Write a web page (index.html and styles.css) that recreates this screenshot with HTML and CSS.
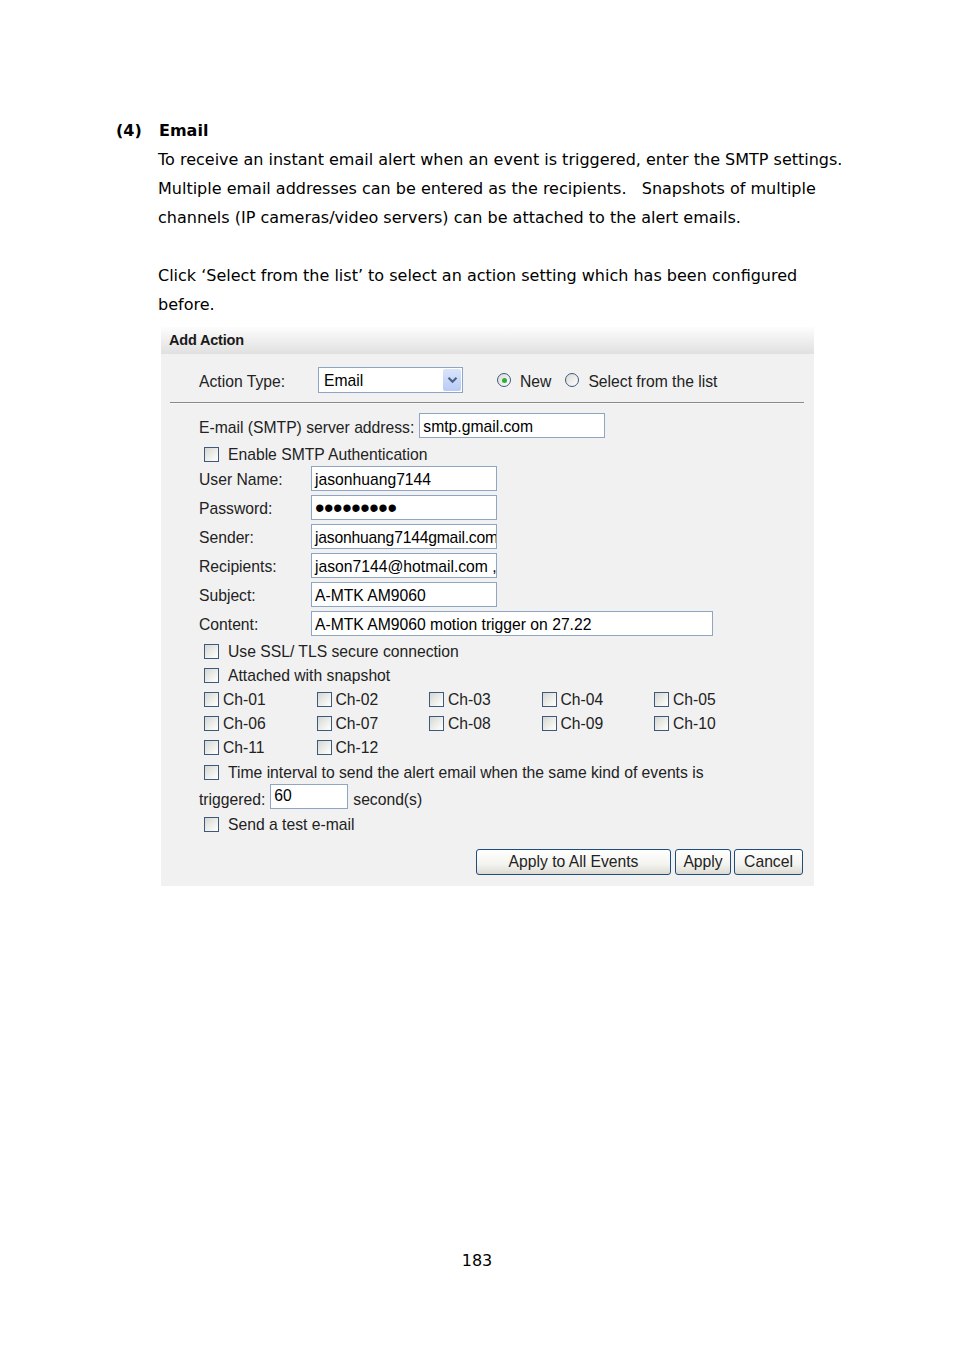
FILE: index.html
```html
<!DOCTYPE html>
<html lang="en">
<head>
<meta charset="utf-8">
<title>Email</title>
<link rel="stylesheet" href="styles.css">
</head>
<body>
<div class="page">
  <h2 class="heading"><span class="num">(4)</span><span>Email</span></h2>
  <div class="content">
    <p class="para">To receive an instant email alert when an event is triggered, enter the SMTP settings.<br>Multiple email addresses can be entered as the recipients.&nbsp;&nbsp; Snapshots of multiple<br>channels (IP cameras/video servers) can be attached to the alert emails.</p>
    <p class="para">Click ‘Select from the list’ to select an action setting which has been configured<br>before.</p>

    <section class="panel">
      <header class="panel-head">Add Action</header>
      <div class="panel-body">
        <div class="type-row">
          <span class="type-lbl">Action Type:</span>
          <div class="select">
            <span class="select-val">Email</span>
            <span class="select-btn"><svg width="11" height="8" viewBox="0 0 11 8"><path d="M1.5 1.8 L5.5 5.8 L9.5 1.8" fill="none" stroke="#4d6185" stroke-width="2.2"/></svg></span>
          </div>
          <span class="radio-opt first"><span class="radio on"></span><span class="rtext">New</span></span>
          <span class="radio-opt"><span class="radio"></span><span class="rtext">Select from the list</span></span>
        </div>
        <div class="sep"></div>

        <div class="form">
          <div class="row r-server"><span class="lbl-free">E-mail (SMTP) server address:</span><span class="field f-std">smtp.gmail.com</span></div>
          <div class="cbrow r-auth"><span class="cb"></span><span class="cbtext">Enable SMTP Authentication</span></div>
          <div class="row"><span class="lbl">User Name:</span><span class="field f-std">jasonhuang7144</span></div>
          <div class="row r-gap"><span class="lbl">Password:</span><span class="field f-std f-pwd"><span class="dots">•••••••••</span></span></div>
          <div class="row r-gap"><span class="lbl">Sender:</span><span class="field f-std f-tight">jasonhuang7144gmail.com</span></div>
          <div class="row r-gap"><span class="lbl">Recipients:</span><span class="field f-std">jason7144@hotmail.com ,</span></div>
          <div class="row r-gap"><span class="lbl">Subject:</span><span class="field f-std">A-MTK AM9060</span></div>
          <div class="row r-gap"><span class="lbl">Content:</span><span class="field f-wide">A-MTK AM9060 motion trigger on 27.22</span></div>
          <div class="cbrow r-ssl"><span class="cb"></span><span class="cbtext">Use SSL/ TLS secure connection</span></div>
          <div class="cbrow"><span class="cb"></span><span class="cbtext">Attached with snapshot</span></div>
          <div class="ch-grid">
            <span class="ch"><span class="cb"></span><span class="chtext">Ch-01</span></span>
            <span class="ch"><span class="cb"></span><span class="chtext">Ch-02</span></span>
            <span class="ch"><span class="cb"></span><span class="chtext">Ch-03</span></span>
            <span class="ch"><span class="cb"></span><span class="chtext">Ch-04</span></span>
            <span class="ch"><span class="cb"></span><span class="chtext">Ch-05</span></span>
            <span class="ch"><span class="cb"></span><span class="chtext">Ch-06</span></span>
            <span class="ch"><span class="cb"></span><span class="chtext">Ch-07</span></span>
            <span class="ch"><span class="cb"></span><span class="chtext">Ch-08</span></span>
            <span class="ch"><span class="cb"></span><span class="chtext">Ch-09</span></span>
            <span class="ch"><span class="cb"></span><span class="chtext">Ch-10</span></span>
            <span class="ch"><span class="cb"></span><span class="chtext">Ch-11</span></span>
            <span class="ch"><span class="cb"></span><span class="chtext">Ch-12</span></span>
          </div>
          <div class="cbrow r-time"><span class="cb"></span><span class="cbtext">Time interval to send the alert email when the same kind of events is</span></div>
          <div class="row r-trig"><span class="trig-lbl">triggered:</span><span class="field f-num">60</span><span class="unit">second(s)</span></div>
          <div class="cbrow r-test"><span class="cb"></span><span class="cbtext">Send a test e-mail</span></div>
          <div class="btns">
            <button class="btn b-all">Apply to All Events</button>
            <button class="btn b-apply">Apply</button>
            <button class="btn b-cancel">Cancel</button>
          </div>
        </div>
      </div>
    </section>
  </div>
  <div class="pagenum">183</div>
</div>
</body>
</html>
```

FILE: styles.css
```css
html, body {
  margin: 0;
  padding: 0;
  background: #ffffff;
}

.page {
  width: 954px;
  padding-top: 117px;
  font-family: "DejaVu Sans", Verdana, sans-serif;
  color: #000;
}

.heading {
  margin: 0;
  padding-left: 116px;
  font-size: 16px;
  font-weight: bold;
  line-height: 28px;
  display: flex;
}

.heading .num {
  width: 43px;
}

.content {
  margin-left: 158px;
}

.para {
  margin: 0 0 29px 0;
  font-size: 16px;
  line-height: 29px;
}

.para:last-of-type {
  margin-bottom: 0;
}

/* Panel */
.panel {
  margin-top: 8px;
  margin-left: 3px;
  width: 653px;
  background: #f1f1f1;
  font-family: "Liberation Sans", Arial, sans-serif;
  font-size: 15.7px;
  color: #222;
}

.panel-head {
  height: 27px;
  line-height: 27px;
  padding-left: 8px;
  font-weight: bold;
  font-size: 14.5px;
  letter-spacing: -0.2px;
  color: #1a1a1a;
  background: linear-gradient(#fdfdfd, #e0e0e0);
}

.panel-body {
  padding-bottom: 11px;
}

.type-row {
  display: flex;
  align-items: center;
  height: 26px;
  padding-top: 13px;
  padding-left: 38px;
}

.type-lbl {
  width: 119px;
  padding-top: 3px;
}

.select {
  box-sizing: border-box;
  width: 145px;
  height: 26px;
  border: 1px solid #8ea6c4;
  background: #fff;
  display: flex;
  align-items: center;
  justify-content: space-between;
  padding-left: 5px;
  padding-right: 1px;
  color: #000;
}

.select-val {
  padding-top: 2px;
}

.select-btn {
  width: 18px;
  height: 22px;
  border-radius: 2px;
  background: linear-gradient(#dae5fc, #b8cbf5);
  display: flex;
  align-items: center;
  justify-content: center;
}

.radio-opt {
  display: flex;
  align-items: center;
  margin-left: 14px;
}

.radio-opt.first {
  margin-left: 34px;
}

.rtext {
  padding-top: 3px;
}

.radio {
  box-sizing: border-box;
  width: 14px;
  height: 14px;
  border: 1px solid #3d5a7e;
  border-radius: 50%;
  background: linear-gradient(135deg, #d9d9d4, #ffffff);
  margin-right: 9px;
  display: flex;
  align-items: center;
  justify-content: center;
}

.radio.on::after {
  content: "";
  width: 5px;
  height: 5px;
  border-radius: 50%;
  background: #2fae3a;
}

.sep {
  height: 1px;
  margin: 9px 10px 0 9px;
  background: #8a8a8a;
  border-bottom: 1px solid #f8f8f8;
}

.form {
  padding-left: 38px;
  display: flex;
  flex-direction: column;
}

.row {
  display: flex;
  align-items: center;
  height: 25px;
}

.r-server {
  margin-top: 9px;
}

.r-gap {
  margin-top: 4px;
}

.lbl {
  width: 112px;
  flex: none;
  padding-top: 2px;
}

.lbl-free {
  margin-right: 5px;
  padding-top: 4px;
}

.field {
  box-sizing: border-box;
  height: 25px;
  border: 1px solid #8ea6c4;
  background: #fff;
  color: #000;
  padding-left: 3px;
  padding-top: 2px;
  display: flex;
  align-items: center;
  white-space: nowrap;
  overflow: hidden;
}

.f-pwd {
  overflow: visible;
  padding-top: 0;
}

.f-tight {
  letter-spacing: -0.2px;
}

.f-std {
  width: 186px;
}

.f-wide {
  width: 402px;
}

.f-num {
  width: 78px;
  align-items: flex-start;
  padding-top: 2px;
}

.dots {
  font-size: 27px;
  letter-spacing: -0.4px;
  line-height: 20px;
  padding-top: 1px;
}

.cbrow {
  display: flex;
  align-items: center;
  height: 24px;
  margin-left: 5px;
}

.r-auth {
  margin-top: 4px;
}

.r-ssl {
  margin-top: 3px;
}

.r-time {
  margin-top: 1px;
}

.r-test {
  margin-top: 3px;
}

.cb {
  box-sizing: border-box;
  flex: none;
  width: 15px;
  height: 15px;
  border: 1px solid #3d5a7e;
  background: linear-gradient(135deg, #d6d6d1 0%, #f4f4f1 70%, #ffffff 100%);
}

.cbtext {
  margin-left: 9px;
  padding-top: 2px;
}

.ch-grid {
  display: grid;
  grid-template-columns: repeat(5, 112.5px);
  grid-auto-rows: 24px;
  margin-left: 5px;
}

.ch {
  display: flex;
  align-items: center;
}

.ch .cb {
  margin-right: 4px;
}

.chtext {
  padding-top: 2px;
}

.r-trig {
  height: 25px;
}

.trig-lbl {
  margin-right: 5px;
  padding-top: 7px;
}

.unit {
  margin-left: 5px;
  padding-top: 7px;
}

.btns {
  display: flex;
  justify-content: flex-end;
  gap: 3px;
  margin-top: 13px;
  margin-right: 11px;
}

.btn {
  box-sizing: border-box;
  height: 26px;
  border: 1px solid #1f4d7e;
  border-radius: 3px;
  background: linear-gradient(#ffffff, #f3f3ef 60%, #dcdad2);
  font-family: "Liberation Sans", Arial, sans-serif;
  font-size: 15.7px;
  color: #222;
  padding: 0;
}

.b-all {
  width: 195px;
  margin-right: 1px;
}

.b-apply {
  width: 56px;
}

.b-cancel {
  width: 69px;
}

.pagenum {
  margin-top: 360px;
  text-align: center;
  font-size: 16px;
  line-height: 29px;
}
```
